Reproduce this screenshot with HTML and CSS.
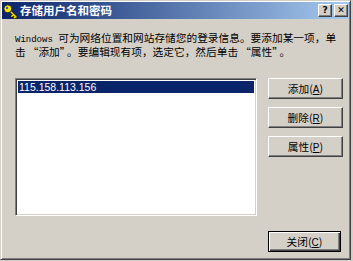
FILE: index.html
```html
<!DOCTYPE html>
<html lang="zh-CN">

<head>
    <meta charset="UTF-8">
    <title>存储用户名和密码</title>
    <link rel="stylesheet" href="styles.css">
</head>

<body>
    <div class="window">
        <header class="titlebar">
            <svg class="key" width="15" height="15" viewBox="0 0 15 15">
                <path d="M6 6 L13.5 13.5 M10.5 10.5 L8.5 12.5 M12.5 12.5 L11 14" stroke="#202020" stroke-width="3" stroke-linecap="round" fill="none"/>
                <path d="M6 6 L13 13 M10.5 10.5 L8.8 12.2 M12.5 12.5 L11.3 13.7" stroke="#f8e800" stroke-width="1.4" stroke-linecap="round" fill="none"/>
                <circle cx="4.8" cy="4.8" r="4" fill="#f8e800" stroke="#202020" stroke-width="1"/>
                <circle cx="4" cy="4" r="1.2" fill="#3a5fa8"/>
            </svg>
            <span class="title">存储用户名和密码</span>
            <div class="caption">
                <span class="cap-btn">?</span>
                <span class="cap-btn">&#x2715;</span>
            </div>
        </header>

        <section class="content">
            <p class="intro"><span class="latin">Windows </span>可为网络位置和网站存储您的登录信息。要添加某一项，单击<span class="q">“添加”</span>。要编辑现有项，选定它，然后单击<span class="q">“属性”</span>。</p>

            <div class="main">
                <div class="listbox">
                    <div class="item selected">115.158.113.156</div>
                </div>
                <div class="side">
                    <button class="btn">添加(<u>A</u>)</button>
                    <button class="btn">删除(<u>R</u>)</button>
                    <button class="btn">属性(<u>P</u>)</button>
                </div>
            </div>

            <footer class="footer">
                <button class="btn default">关闭(<u>C</u>)</button>
            </footer>
        </section>
    </div>
</body>

</html>
```

FILE: styles.css
```css
* {
    margin: 0;
    box-sizing: border-box;
}

body {
    margin: 0;
    background-color: #d4d0c8;
    font-family: "Noto Sans CJK SC", sans-serif;
    font-size: 10.7px;
    color: black;
}

.window {
    width: 351px;
    height: 260px;
    background-color: #d4d0c8;
    border: 1px solid;
    border-color: #d4d0c8 #404040 #404040 #d4d0c8;
    box-shadow: inset 1px 1px #ffffff, inset -1px -1px #808080;
    padding: 1px;
    display: flex;
    flex-direction: column;
}

.titlebar {
    height: 17px;
    display: flex;
    align-items: center;
    padding: 0 1px 0 1px;
    background: linear-gradient(to right, #0a246a, #a6caf0);
}

.key {
    margin-top: 1px;
}

.title {
    margin-left: 2px;
    color: white;
    font-weight: bold;
    font-size: 11.5px;
    line-height: 17px;
}

.caption {
    margin-left: auto;
    display: flex;
    gap: 2px;
}

.cap-btn {
    width: 14px;
    height: 13px;
    display: flex;
    align-items: center;
    justify-content: center;
    background-color: #d4d0c8;
    border: 1px solid;
    border-color: #ffffff #404040 #404040 #ffffff;
    box-shadow: inset -1px -1px #808080;
    font-family: "DejaVu Sans", sans-serif;
    font-weight: bold;
    font-size: 9px;
    line-height: 1;
}

.content {
    flex-grow: 1;
    padding: 13px 6px 0 13px;
    display: flex;
    flex-direction: column;
}

.intro {
    line-height: 12px;
    padding-right: 3px;
}

.latin {
    font-family: "Liberation Mono", monospace;
    font-size: 9px;
}

.q {
    padding: 0 2px;
}

.main {
    margin-top: 20px;
    display: flex;
    justify-content: space-between;
}

.listbox {
    width: 242px;
    height: 138px;
    background-color: white;
    border: 1px solid;
    border-color: #808080 #ffffff #ffffff #808080;
    box-shadow: inset 1px 1px #404040, inset -1px -1px #d4d0c8;
    padding: 2px;
}

.item {
    height: 12px;
    line-height: 12px;
    padding-left: 1px;
    font-family: "Liberation Sans", sans-serif;
    font-size: 10.5px;
}

.selected {
    background-color: #0a246a;
    color: white;
}

.side {
    display: flex;
    flex-direction: column;
    gap: 8px;
}

.btn {
    width: 75px;
    height: 21px;
    padding: 0;
    background-color: #d4d0c8;
    border: 1px solid;
    border-color: #ffffff #404040 #404040 #ffffff;
    box-shadow: inset -1px -1px #808080;
    font-family: "Noto Sans CJK SC", sans-serif;
    font-size: 10.7px;
    color: black;
}

.btn u {
    font-family: "Liberation Sans", sans-serif;
    font-size: 10px;
}

.footer {
    margin-top: 15px;
    display: flex;
    justify-content: flex-end;
}

.default {
    width: 73px;
    margin-right: 2px;
    border: 1px solid black;
    box-shadow: inset 1px 1px #ffffff, inset -1px -1px #404040, inset -2px -2px #808080;
}
```
